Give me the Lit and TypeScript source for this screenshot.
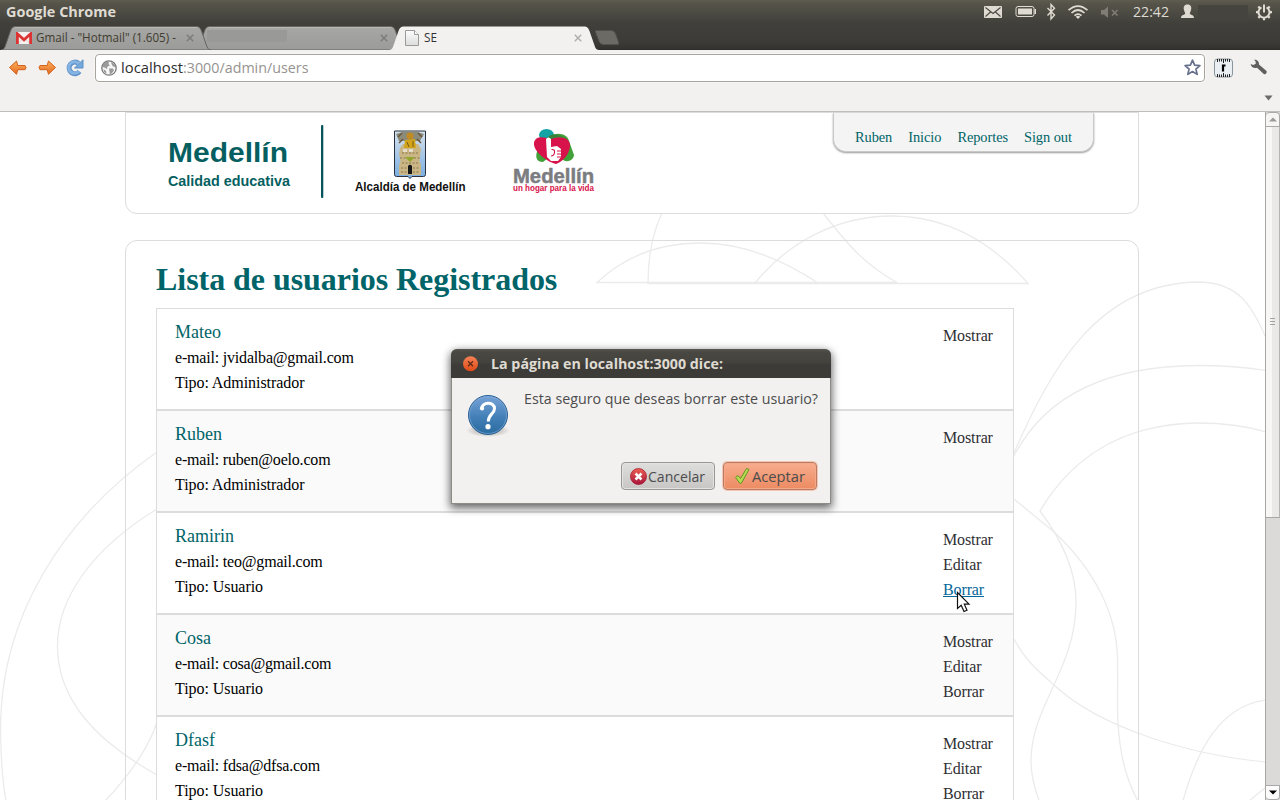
import { LitElement, html, css, svg, nothing } from "lit";
import { customElement, property } from "lit/decorators.js";

/** Single line of text fitted to a fixed advance width. */
const line = (text: string, width: number, size: number, cls: string, h = 20, base = 15) => html`
  <svg class="line" width=${width} height=${h}>
    <text class=${cls} x="0" y=${base} font-size=${size} textLength=${width} lengthAdjust="spacingAndGlyphs">${text}</text>
  </svg>`;

const lineCss = css`
  :host { box-sizing: border-box; }
  svg { display: block; flex: none; }
  .line { overflow: visible; }
  text { font-family: "Open Sans", "Noto Sans", sans-serif; white-space: pre; }
`;

@customElement("system-panel")
class SystemPanel extends LitElement {
  static styles = [lineCss, css`
    :host { display: flex; height: 24px; padding: 0 8px 0 6px; font-family: "Open Sans", sans-serif;
      background: linear-gradient(#5f5d4f 0, #57554a 3px, #44433d 20px, #403f3a 24px); }
    .title { fill: #dfdbd2; font-weight: 700; }
    .clock { fill: #dfdbd2; }
    .grow { flex: 1; }
    .user { width: 50px; height: 15px; margin: 5px 8px 0 4px; background: #45443e; }
  `];
  render() {
    return html`
      ${line("Google Chrome", 110, 14, "title", 24, 17)}
      <div class="grow"></div>
      <svg width="149" height="24" viewBox="984 0 149 24">
        <rect x="984" y="6" width="18" height="12" rx="1" fill="#dfdbd2"/>
        <path d="M985.500 7.500L993 13.500L1000.500 7.500M985.500 16.500L990.500 12M1000.500 16.500L995.500 12" fill="none" stroke="#4a4942" stroke-width="1.100"/>
        <rect x="1016" y="6.500" width="18" height="10" rx="2" fill="none" stroke="#dfdbd2"/>
        <rect x="1018" y="8.500" width="14" height="6" fill="#dfdbd2"/>
        <rect x="1034.500" y="9" width="1.500" height="5" fill="#dfdbd2"/>
        <path d="M1047.500 8L1054.500 15L1051 19V4.500L1054.500 8.200L1047.500 15.500" fill="none" stroke="#dfdbd2" stroke-width="1.400"/>
        <path d="M1068.500 10.200Q1078 2 1087.500 10.200M1071.500 13Q1078 7 1084.500 13M1074.500 15.700Q1078 12.500 1081.500 15.700" fill="none" stroke="#dfdbd2" stroke-width="1.700"/>
        <path d="M1078 19L1075.700 16.700Q1078 15 1080.300 16.700Z" fill="#dfdbd2"/>
        <path d="M1101 10H1104L1108 6.500V18L1104 14.500H1101Z" fill="#7f7d75"/>
        <path d="M1112 10L1117.500 15.500M1117.500 10L1112 15.500" stroke="#7f7d75" stroke-width="1.600"/>
      </svg>
      ${line("22:42", 36, 14, "clock", 24, 17)}
      <svg width="25" height="24" viewBox="1169 0 25 24">
        <path d="M1187.500 4.500C1191 4.500 1191.800 7 1191 10C1190.500 12 1189.800 12.500 1189.800 14C1191.500 15 1194 15 1194 18H1181C1181 15 1183.500 15 1185.200 14C1185.200 12.500 1184.500 12 1184 10C1183.200 7 1184 4.500 1187.500 4.500Z" fill="#dfdbd2"/>
      </svg>
      <div class="user"></div>
      <svg width="16" height="24" viewBox="1256 0 16 24">
        <g stroke="#dfdbd2" fill="none">
          <path d="M1261.500 7.300A5.500 5.500 0 1 0 1266.500 7.300" stroke-width="2"/>
          <path d="M1264 4.500V12.500" stroke-width="2"/>
          <path d="M1256 12.200H1258.500M1269.500 12.200H1272M1264 17.700V20.200M1258.300 6.500L1260 8.200M1269.700 6.500L1268 8.200M1258.300 17.900L1260 16.200M1269.700 17.900L1268 16.200" stroke-width="2.200"/>
        </g>
      </svg>`;
  }
}

@customElement("browser-tab")
class BrowserTab extends LitElement {
  @property({ type: Number }) width = 210;
  @property({ type: Boolean }) active = false;
  static styles = [lineCss, css`
    :host { display: block; position: relative; height: 26px; margin-right: -16px; flex: none; }
    :host([active]) { z-index: 3; }
    :host([front]) { z-index: 2; }
    .shape { position: absolute; left: 0; top: 0; }
    .row { position: relative; display: flex; align-items: flex-start; height: 26px; }
    .grow { flex: 1; }
    .close { margin: 8px 17px 0 0; }
  `];
  render() {
    const w = this.width;
    const d = `M0 24C3 24 4 21 5 18L9.500 5C11 1.500 12 .500 15 .500H${w - 15}C${w - 12} .500 ${w - 11} 1.500 ${w - 9.5} 5L${w - 5} 18C${w - 4} 21 ${w - 3} 24 ${w} 24Z`;
    return html`
      <svg class="shape" width=${w} height="24">
        <defs><linearGradient id="g" x2="0" y2="1"><stop offset="0" stop-color="#a7a7a5"/><stop offset="1" stop-color="#9b9b99"/></linearGradient></defs>
        <path d=${d} fill=${this.active ? "#f2f1f0" : "url(#g)"} stroke=${this.active ? "none" : "#656460"}/>
        ${this.active ? nothing : svg`<path d="M14 1.500H${w - 14}" stroke="#b8b8b6"/>`}
      </svg>
      <div class="row" style="width:${w}px">
        <slot></slot><div class="grow"></div>
        <svg class="close" width="8" height="8" viewBox="0 0 8 8"><path d="M.8 .8L7.200 7.200M7.200 .8L.8 7.200" stroke=${this.active ? "#b0afad" : "#7d7c79"} stroke-width="1.500"/></svg>
      </div>`;
  }
}

@customElement("browser-chrome")
class BrowserChrome extends LitElement {
  static styles = [lineCss, css`
    :host { display: block; }
    .strip { display: flex; height: 26px; padding-left: 1px; box-sizing: border-box; background: linear-gradient(#403f3a, #3c3b37 70%, #34332f 94%, #2b2a27); }
    .strip > * { margin-top: 2px; }
    .fav { margin: 6px 4px 0 15px; }
    .doc { margin: 4px 5px 0 16px; }
    .tabtext { fill: #403c2e; }
    .dark { fill: #333; }
    .hid { width: 80px; height: 12px; margin: 4px 0 0 12px; background: #999997; }
    .strip > .new { margin: 6px 0 0 10px; }
    .bar { display: flex; align-items: center; height: 35px; padding-left: 8px; background: #f2f1f0; gap: 9px; }
    .omni { box-sizing: border-box; display: flex; align-items: center; width: 1110px; height: 28px; margin-left: 2px;
      padding: 0 3px 0 5px; background: #fff; border: 1px solid #a9a49d; border-radius: 4px; box-shadow: 0 0 0 1px #f7f6f5; }
    .url { display: flex; margin-left: 4px; }
    .host { fill: #2e2e2e; } .path { fill: #969390; }
    .grow { flex: 1; }
    .wrench { margin-left: 8px; }
    .marks { box-sizing: border-box; display: flex; justify-content: flex-end; height: 27px; padding: 10px 7px 0 0; background: #f2f1f0; border-bottom: 1px solid #bebdbb; }
  `];
  render() {
    const gid = svg`<linearGradient id="o" x2="0" y2="1"><stop offset="0" stop-color="#fbb05e"/><stop offset="1" stop-color="#e4691f"/></linearGradient>`;
    return html`
      <div class="strip">
        <browser-tab front .width=${210}>
          <svg class="fav" width="16" height="12" viewBox="0 0 17 13" preserveAspectRatio="none">
            <rect width="17" height="13" rx="1" fill="#f4f2f0"/>
            <path d="M3 12L7 7.500M14 12L10 7.500" stroke="#d9cfcb" />
            <path d="M1.500 13V2L8.500 8.500L15.500 2V13" fill="none" stroke="#dd3433" stroke-width="3"/>
          </svg>
          ${line('Gmail - "Hotmail" (1.605) -', 140, 12, "tabtext", 24, 16)}
        </browser-tab>
        <browser-tab .width=${210}><div class="hid"></div></browser-tab>
        <browser-tab active .width=${210}>
          <svg class="doc" width="14" height="16" viewBox="0 0 14 16">
            <defs><linearGradient id="p" x2="0" y2="1"><stop offset="0" stop-color="#fdfdfd"/><stop offset="1" stop-color="#dcdcdc"/></linearGradient></defs>
            <path d="M.500 .500H9.500L13.500 4.500V15.500H.500Z" fill="url(#p)" stroke="#9a9a98"/>
            <path d="M9.500 .500V4.500H13.500" fill="#fff" stroke="#9a9a98"/>
          </svg>
          ${line("SE", 13, 12, "dark", 24, 16)}
        </browser-tab>
        <svg class="new" width="27" height="15" viewBox="0 0 27 15"><path d="M3.500 .500H18C21 .500 22 2 23 5L25.500 12C26 14 26 14.500 24 14.500H11C8 14.500 6.500 13 5.500 10L2.500 2C2 1 2 .500 3.500 .500Z" fill="#6b6a65" stroke="#52514c"/></svg>
      </div>
      <div class="bar">
        <svg width="20" height="16" viewBox="0 0 20 16"><defs>${gid}</defs><path d="M1.500 7.500L8.500 1L9.800 5.500H17Q19 7.500 17 9.700H9.800L8.500 14.300Z" fill="url(#o)" stroke="#d2641f" stroke-linejoin="round"/></svg>
        <svg width="20" height="16" viewBox="0 0 20 16"><defs>${gid}</defs><path d="M18.500 7.500L11.500 1L10.200 5.500H3Q1 7.500 3 9.700H10.200L11.500 14.300Z" fill="url(#o)" stroke="#d2641f" stroke-linejoin="round"/></svg>
        <svg width="18" height="18" viewBox="0 0 18 18"><path d="M13.500 12.500A5.800 5.800 0 1 1 12.500 4.300" fill="none" stroke="#5b90c9" stroke-width="5"/><path d="M17 .800V9H8.500Z" fill="#74a7da" stroke="#5b90c9" stroke-linejoin="round"/><path d="M13 12.200A5.800 5.800 0 1 1 12.800 4.600" fill="none" stroke="#86b4e2" stroke-width="3"/></svg>
        <div class="omni">
          <svg width="16" height="16" viewBox="0 0 16 16"><circle cx="8" cy="8" r="7.200" fill="#f6f6f6" stroke="#777" stroke-width="1.300"/><path d="M2 4L5 1.800L8 2L7.500 4L9 5.500L6.500 6.500L6 9L3.500 7.500L1.500 7ZM10 2L13.500 4L14.500 7L12 6.500L10.500 4ZM8 8.500L12 8.500L13 10.500L10.500 13.500L9 14.500L8.500 11.500ZM2.500 9L5 11L5.500 13.500L3 12Z" fill="#9a9a9a"/></svg>
          <div class="url">${line("localhost", 62, 14.5, "host", 22, 16)}${line(":3000/admin/users", 125.5, 14.5, "path", 22, 16)}</div>
          <div class="grow"></div>
          <svg width="17" height="17" viewBox="0 0 17 17"><path d="M8.500 1.200L10.600 6.200L15.900 6.600L11.900 10.100L13.200 15.400L8.500 12.500L3.800 15.400L5.100 10.100L1.100 6.600L6.400 6.200Z" fill="#fff" stroke="#66708c" stroke-width="1.700" stroke-linejoin="round"/></svg>
        </div>
        <svg width="19" height="20" viewBox="0 0 19 20">
          <rect x=".500" y="1" width="18" height="18" rx="3" fill="#e9eff3" stroke="#8b959c"/>
          <path d="M3.500 1V4M5.500 1V3.500M7.500 1V3.500M9.500 1V5M11.500 1V3.500M13.500 1V3.500M15.500 1V4M3.500 16V19M5.500 16.500V19M7.500 16.500V19M9.500 15V19M11.500 16.500V19M13.500 16.500V19M15.500 16V19" stroke="#222"/>
          <path d="M9 13.500V6.500M8.500 7.500H11.500" stroke="#000" stroke-width="2.200" fill="none"/>
        </svg>
        <svg class="wrench" width="18" height="17" viewBox="0 0 18 17"><path d="M4 .8C7 .5 9.200 2.500 9 5.500L16.500 12C17.500 13.500 15.500 16 13.800 15L7 8.800C4 9.800 1 8 .7 5L3.300 6L5.800 4.800L5.500 2.300Z" fill="#5f5f5f"/></svg>
      </div>
      <div class="marks"><svg width="9" height="6" viewBox="0 0 9 6"><path d="M.500 .500H8.500L4.500 5.500Z" fill="#6b6b6b"/></svg></div>`;
  }
}

interface User { name: string; mail: string; type: string; actions: string[]; hover?: string }
const USERS: User[] = [
  { name: "Mateo", mail: "jvidalba@gmail.com", type: "Administrador", actions: ["Mostrar"] },
  { name: "Ruben", mail: "ruben@oelo.com", type: "Administrador", actions: ["Mostrar"] },
  { name: "Ramirin", mail: "teo@gmail.com", type: "Usuario", actions: ["Mostrar", "Editar", "Borrar"], hover: "Borrar" },
  { name: "Cosa", mail: "cosa@gmail.com", type: "Usuario", actions: ["Mostrar", "Editar", "Borrar"] },
  { name: "Dfasf", mail: "fdsa@dfsa.com", type: "Usuario", actions: ["Mostrar", "Editar", "Borrar"] },
];

@customElement("users-page")
class UsersPage extends LitElement {
  static styles = [lineCss, css`
    :host { display: block; position: relative; width: 1265px; height: 688px; overflow: hidden; background: #fff; font: 16px/25px "Liberation Serif", serif; color: #000; }
    .backdrop { position: absolute; left: 0; top: 0; }
    .col { position: relative; width: 1014px; margin-left: 125px; }
    .head { box-sizing: border-box; display: flex; justify-content: space-between; height: 102px; background: #fff; border: 1px solid #dcdcdc; border-radius: 0 0 12px 12px; }
    nav { box-sizing: border-box; display: flex; gap: 16px; width: 261px; height: 39px; margin-right: 44px; padding: 12px 0 0 21px; font-size: 14.4px; letter-spacing: -.07px; color: #006468;
      background: #f4f4f4; border: 1px solid #c9c9c9; border-top: 0; border-radius: 0 0 13px 13px; box-shadow: 0 1px 2px #999; }
    .panel { box-sizing: border-box; height: 600px; margin-top: 26px; padding: 23px 0 0 30px; border: 1px solid #dcdcdc; border-radius: 12px; }
    h1 { margin: 0 0 14px; font-size: 32px; line-height: 30px; letter-spacing: -.05px; color: #006468; }
    ul { list-style: none; margin: 0; padding: 0; width: 858px; }
    li { box-sizing: border-box; display: flex; justify-content: space-between; height: 102px; padding: 11px 20px 0 18px; border: 1px solid #dcdcdc; background: #fff; }
    li:nth-child(even) { background: #fafafa; }
    .name { font-size: 18px; color: #006468; }
    .mail { letter-spacing: -.19px; }
    .type { letter-spacing: -.06px; }
    .acts { padding-top: 3px; width: 50px; color: #2f2f33; letter-spacing: -.12px; }
    .hover { color: #07689a; text-decoration: underline; }
    .brand { font-family: "Liberation Sans", sans-serif; font-weight: 700; }
  `];
  render() {
    return html`
      <svg class="backdrop" width="1265" height="688" viewBox="0 112 1265 688" fill="none" stroke="#ebebeb" stroke-width="1.300">
        <path d="M818 283C780 258 742 243 701 243C660 243 625 256 597 282.500H897C865 265 848 245 823 213M662 213C653 232 648 255 648 283.500H1028C990 240 945 216 892 216C840 216 790 240 755 283"/>
        <path d="M1014 453C1050 370 1098 282 1200 282C1238 283 1252 305 1266 338M1014 456C1030 425 1070 366 1198 365.500C1222 365.500 1245 367 1266 370.500"/>
        <path d="M1266 432C1243 425 1220 423 1198 423C1120 424 1070 460 1040 511C1062 540 1076 570 1076 602C1076 670 1031 705 1031 761C1031 775 1034 787 1039 800"/>
        <path d="M1014 499L1054 532C1095 570 1117 615 1117.500 659C1118 690 1117 705 1118 724C1120 755 1126 780 1138 801M1014 639C1025 660 1037 670 1054 685C1100 728 1190 755 1266 762M1183 801C1197 750 1220 706 1266 700M1249 801L1266 787"/>
        <path d="M157 452C60 520 0 620 .500 730C1 760 2 780 6 801M157 509C90 550 57 600 57.500 647C58 700 95 740 157 775M157 722C150 745 130 775 105 801"/>
      </svg>
      <div class="col head">
        <svg width="500" height="100" viewBox="126 113 500 100">
          <g>
            <text class="brand" x="168" y="162" font-size="28" textLength="120" lengthAdjust="spacingAndGlyphs" fill="#055f61">Medellín</text>
            <text class="brand" x="168" y="186" font-size="14" textLength="122" lengthAdjust="spacingAndGlyphs" fill="#055f61">Calidad educativa</text>
            <text class="brand" x="355" y="190.500" font-size="12" textLength="110.500" lengthAdjust="spacingAndGlyphs" fill="#111">Alcaldía de Medellín</text>
            <text class="brand" x="513" y="182.500" font-size="20" textLength="81" lengthAdjust="spacingAndGlyphs" fill="#7b7c7f" stroke="#7b7c7f" stroke-width=".5">Medellín</text>
            <text class="brand" x="513" y="190.500" font-size="8.800" textLength="81" lengthAdjust="spacingAndGlyphs" fill="#d8124b">un hogar para la vida</text>
          </g>
          <rect x="321" y="125" width="2.300" height="73" rx="1" fill="#05555a"/>
          <g>
            <defs><linearGradient id="sky" x2="0" y2="1"><stop offset="0" stop-color="#d7e3ee"/><stop offset="1" stop-color="#78ace0"/></linearGradient></defs>
            <path d="M394.500 131H425.500V174.500Q425.500 176.500 423.500 176.500H412L410 178.500L408 176.500H396.500Q394.500 176.500 394.500 174.500Z" fill="url(#sky)" stroke="#29313f"/>
            <path d="M396 134L404 131.500L416 131.500L424 134L420 141L399 141Z" fill="#8a8b79"/>
            <path d="M400 148L403 144L418 144L421 149L419.500 161L421 165V175H399V165L400.500 161L399 154Z" fill="#c9b684"/>
            <path d="M402 153H419M400 158H421M402 163H419M401 168H408M413 168H420M401 172H408M413 172H420" stroke="#8a774d" stroke-dasharray="2 1.500"/>
            <path d="M399 143L403 139M421 143L417 139M398 137L402 133M422 137L418 133" stroke="#6b563a" stroke-width="1.500"/>
            <circle cx="410" cy="136" r="3.500" fill="#c18a22"/><path d="M405 140L415 139L416 148H404Z" fill="#d3a51b"/><path d="M407 142L409 147M413 141V147" stroke="#765c15"/>
            <path d="M403 149H407V152H403ZM409 149H413V152H409Z" fill="#e5ddc9"/>
            <path d="M405 157L410 162L415 157Z" fill="#94a52d"/>
            <path d="M408 174V166Q410 163.500 412 166V174Z" fill="#171717"/>
          </g>
          <g>
            <ellipse cx="546.500" cy="135" rx="7.500" ry="6" fill="#13a3a5"/>
            <path d="M539 147C534 156 536 162 543 162L552 155Z" fill="#41a038"/>
            <path d="M549 137C556 131 568 134 569 141L574 155C573 162 565 163 560 158Z" fill="#41a038"/>
            <path d="M534 143C535 136 543 136 550 139.500C560 135 570 138 570 145C570 153 564 161 556 164C547 162 533 151 534 143Z" fill="#d8124b"/>
            <path d="M550 139.500Q559 134.500 566 138.500Q559 134 553 134.500Q549 135 547 138Z" fill="#38803b"/>
            <path d="M546 139Q548.500 136 551 139V147L557 146L561 149L561 157L558 161H551L547 157Z" fill="#fff"/>
            <path d="M551.500 149.500Q555 149 554.500 152.500Q554 156 551 156M557 151H562M557 154H562M557 157H561" fill="none" stroke="#d8124b" stroke-width="1.100"/>
          </g>
        </svg>
        <nav><span>Ruben</span><span>Inicio</span><span>Reportes</span><span>Sign out</span></nav>
      </div>
      <div class="col panel">
        <h1>Lista de usuarios Registrados</h1>
        <ul>${USERS.map(u => html`<li>
          <div><div class="name">${u.name}</div><div class="mail">e-mail: ${u.mail}</div><div class="type">Tipo: ${u.type}</div></div>
          <div class="acts">${u.actions.map(a => html`<div><span class=${a === u.hover ? "hover" : ""}>${a}</span></div>`)}</div>
        </li>`)}</ul>
      </div>`;
  }
}

@customElement("scroll-bar")
class ScrollBar extends LitElement {
  static styles = css`
    :host { box-sizing: border-box; display: flex; flex-direction: column; width: 15px; height: 688px; background: #dbdad8; border-left: 1px solid #aaa7a2; }
    .btn { box-sizing: border-box; display: grid; place-items: center; height: 15px; background: #f6f5f4; border: 1px solid #a9a9a9; border-left: 0; border-radius: 4px 4px 0 0; }
    .down { margin-top: auto; border-radius: 0 0 4px 4px; background: #fcfcfc; }
    .thumb { box-sizing: border-box; display: grid; place-items: center; height: 391px; background: linear-gradient(90deg, #f8f7f6 50%, #eae9e7 50%); border-bottom: 1px solid #aaa7a2; border-right: 1px solid #b6b4b0; }
    svg { display: block; }
  `;
  render() {
    return html`
      <div class="btn"><svg width="8" height="5"><path d="M0 4.500L4 .500L8 4.500Z" fill="#999"/></svg></div>
      <div class="thumb"><svg width="6" height="8"><path d="M0 .5H5M0 3.500H5M0 6.500H5" stroke="#a5a39f"/></svg></div>
      <div class="btn down"><svg width="8" height="5"><path d="M0 .500H8L4 4.500Z" fill="#000"/></svg></div>`;
  }
}

@customElement("confirm-dialog")
class ConfirmDialog extends LitElement {
  static styles = [lineCss, css`
    :host { display: flex; flex-direction: column; width: 380px; height: 155px; border-radius: 6px 6px 0 0; background: #f2f1f0; box-shadow: inset 0 0 0 1px #8d8b86, 0 3px 8px 1px rgba(0,0,0,.6); }
    .title { display: flex; height: 29px; padding-left: 12px; gap: 13px; background: linear-gradient(#575650 0, #494843 3px, #44433e 13px, #3c3b37 16px); border-radius: 6px 6px 0 0; }
    .title .x { margin-top: 7px; }
    .ttext { fill: #dfdbd2; font-weight: 700; }
    .msg { fill: #4c4c4c; }
    .body { display: flex; padding: 11px 0 0 15px; height: 73px; gap: 14px; }
    .icon { margin-top: 5px; }
    .btns { display: flex; justify-content: flex-end; gap: 8px; padding-right: 14px; }
    .btn { box-sizing: border-box; display: flex; align-items: center; width: 94px; height: 28px; padding-left: 8px; border: 1px solid #999794; border-radius: 4px; background: linear-gradient(#dededd, #c7c6c5); box-shadow: inset 0 0 0 1px #e4e3e2; gap: 1px; }
    .ok { padding-left: 10px; border-color: #b97a62; background: linear-gradient(#f8ad8e, #ec8b62); box-shadow: inset 0 0 0 1px #f5a98b, 0 0 0 1px #f5c7b4; gap: 2px; }
  `];
  render() {
    return html`
      <div class="title">
        <svg class="x" width="15" height="16" viewBox="0 0 15 16"><defs><linearGradient id="c" x2="0" y2="1"><stop offset="0" stop-color="#f58155"/><stop offset="1" stop-color="#df4a16"/></linearGradient></defs><circle cx="7.500" cy="7.800" r="7.500" fill="url(#c)"/><path d="M5 5.300L10 10.300M10 5.300L5 10.300" stroke="#5b2b16" stroke-width="1.300"/></svg>
        ${line("La página en localhost:3000 dice:", 232, 14, "ttext", 29, 20)}
      </div>
      <div class="body">
        <svg class="icon" width="44" height="46" viewBox="0 0 44 46">
          <defs><linearGradient id="q" x2="0" y2="1"><stop offset="0" stop-color="#78a3d8"/><stop offset=".55" stop-color="#4380b7"/><stop offset="1" stop-color="#286a9e"/></linearGradient>
          <radialGradient id="s"><stop offset=".6" stop-color="#cfccc9"/><stop offset="1" stop-color="#f2f1f0"/></radialGradient></defs>
          <ellipse cx="22" cy="36.500" rx="22" ry="6.500" fill="url(#s)"/>
          <circle cx="22" cy="21" r="19.500" fill="url(#q)" stroke="#285f94"/><circle cx="22" cy="21" r="18.500" fill="none" stroke="#86aedb" opacity=".6"/>
          <path d="M15.800 14.500C15.500 8 28.500 7 28.500 14.500C28.500 20 22.300 20 22.300 27.500" fill="none" stroke="#fff" stroke-width="3"/><circle cx="16" cy="14.500" r="2.100" fill="#fff"/><circle cx="22" cy="32.700" r="2.600" fill="#fff"/>
        </svg>
        ${line("Esta seguro que deseas borrar este usuario?", 294, 14.5, "msg", 22, 15)}
      </div>
      <div class="btns">
        <div class="btn">
          <svg width="17" height="17" viewBox="0 0 17 17"><defs><linearGradient id="r" x2="0" y2="1"><stop offset="0" stop-color="#ee6052"/><stop offset="1" stop-color="#a5143c"/></linearGradient></defs><circle cx="8.500" cy="8.500" r="8" fill="url(#r)" stroke="#a91a2f" stroke-width=".8"/><path d="M5.500 5.500L11.500 11.500M11.500 5.500L5.500 11.500" stroke="#fff" stroke-width="2.500"/></svg>
          ${line("Cancelar", 57, 14.5, "msg", 22, 16.5)}
        </div>
        <div class="btn ok">
          <svg width="16" height="18" viewBox="0 0 16 18"><path d="M1.500 10.500L4 8.500L6.500 11.500L12.500 1.500L15 2.500L7.500 16L6 16.500Z" fill="#b5da51" stroke="#669522" stroke-linejoin="round"/></svg>
          ${line("Aceptar", 53, 14.5, "msg", 22, 16.5)}
        </div>
      </div>`;
  }
}

@customElement("app-root")
class AppRoot extends LitElement {
  static styles = css`
    :host { display: block; position: relative; width: 1280px; height: 800px; overflow: hidden; }
    .view { display: flex; height: 688px; }
    confirm-dialog { position: absolute; left: 451px; top: 349px; }
    .cursor { position: absolute; left: 956px; top: 591px; }
  `;
  render() {
    return html`
      <system-panel></system-panel>
      <browser-chrome></browser-chrome>
      <div class="view"><users-page></users-page><scroll-bar></scroll-bar></div>
      <confirm-dialog></confirm-dialog>
      <svg class="cursor" width="15" height="23" viewBox="0 0 15 23"><path d="M1.500 1.500V17.500L5.200 14.200L8 20.500L11 19.200L8.300 13.200H13Z" fill="#fff" stroke="#111" stroke-width="1.200"/></svg>`;
  }
}
